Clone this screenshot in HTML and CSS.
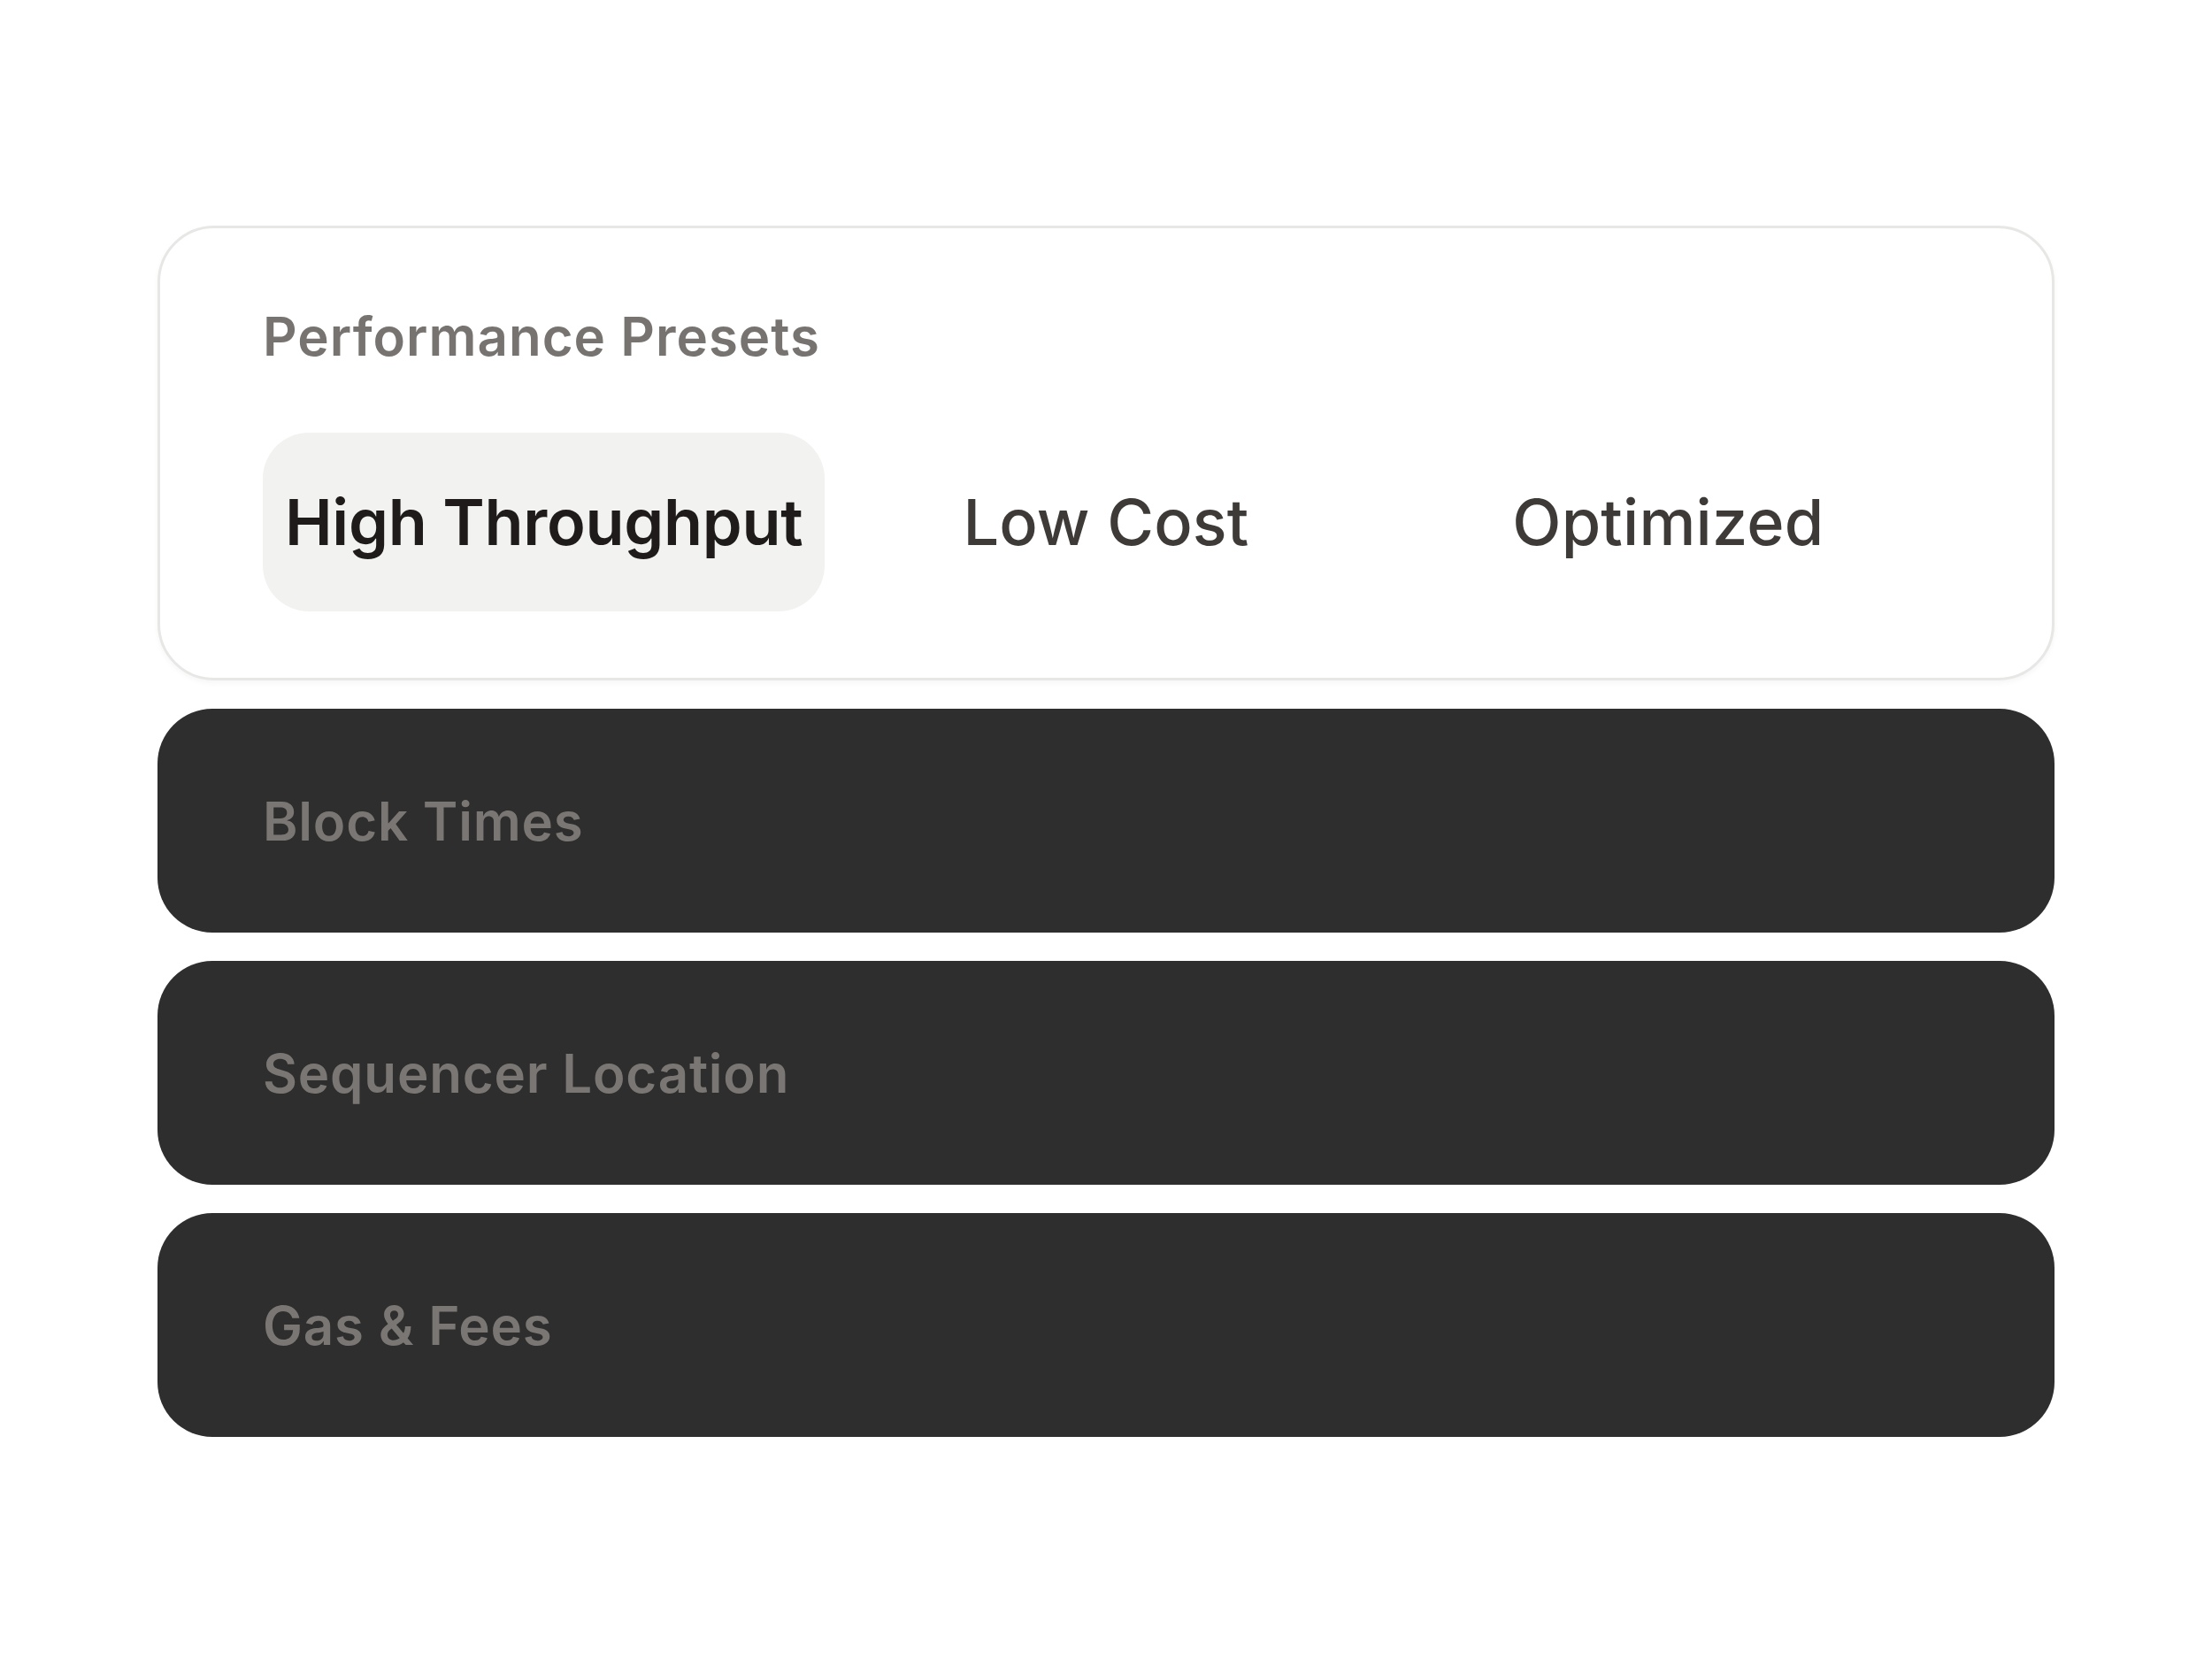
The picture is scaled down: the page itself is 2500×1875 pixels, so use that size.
FILE: index.html
```html
<!DOCTYPE html>
<html lang="en">
<head>
<meta charset="utf-8">
<title>Performance Presets</title>
<link rel="stylesheet" href="styles.css">
</head>
<body>
<main class="stack">
  <section class="presets">
    <h2 class="presets-title">Performance Presets</h2>
    <div class="tabs">
      <button class="tab tab-active">High Throughput</button>
      <button class="tab">Low Cost</button>
      <button class="tab">Optimized</button>
    </div>
  </section>
  <section class="row"><span class="row-label">Block Times</span></section>
  <section class="row"><span class="row-label">Sequencer Location</span></section>
  <section class="row"><span class="row-label">Gas &amp; Fees</span></section>
</main>
</body>
</html>
```

FILE: styles.css
```css
html, body {
  margin: 0;
  padding: 0;
  background: #ffffff;
}
body {
  font-family: Inter, "Noto Sans", "Liberation Sans", sans-serif;
}
.stack {
  width: 2144px;
  margin: 0 auto;
  padding-top: 255px;
  display: flex;
  flex-direction: column;
  gap: 32px;
}
.presets {
  box-sizing: border-box;
  border: 3px solid #e7e7e5;
  border-radius: 64px;
  background: #ffffff;
  padding: 86px 116px 75px;
  box-shadow: 0 3px 6px rgba(0, 0, 0, 0.04);
}
.presets-title {
  margin: 0 0 72px;
  font-size: 60px;
  font-weight: 600;
  line-height: 73px;
  color: #777371;
  letter-spacing: 1px;
}
.tabs {
  display: grid;
  grid-template-columns: repeat(3, 1fr);
}
.tab {
  font-family: inherit;
  border: 0;
  background: transparent;
  padding: 57px 0;
  border-radius: 52px;
  font-size: 72px;
  font-weight: 500;
  line-height: 88px;
  color: #3d3a38;
  text-align: center;
  letter-spacing: 0.2px;
}
.tab-active {
  background: #f2f2f1;
  color: #1e1b1a;
  font-weight: 600;
  letter-spacing: -0.3px;
}
.row {
  box-sizing: border-box;
  height: 253px;
  border-radius: 62px;
  background: #2e2e2e;
  display: flex;
  align-items: center;
  padding: 0 119px;
}
.row-label {
  font-size: 60px;
  font-weight: 600;
  color: #7a7673;
  letter-spacing: 0.8px;
}
```
